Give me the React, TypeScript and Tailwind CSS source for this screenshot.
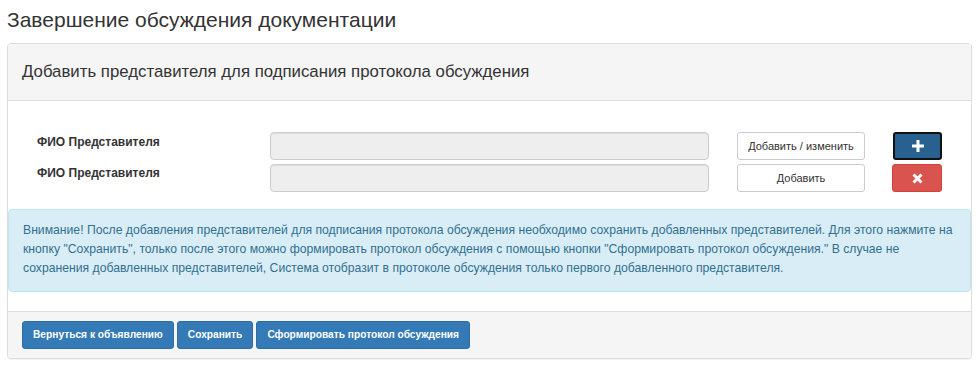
import React from "react";

const font = { fontFamily: '"Liberation Sans", Arial, sans-serif' };

function PlusIcon() {
  return (
    <svg width="12" height="12" viewBox="0 0 12 12">
      <rect x="4.5" y="0" width="3" height="12" fill="#fff" />
      <rect x="0" y="4.5" width="12" height="3" fill="#fff" />
    </svg>
  );
}

function XIcon() {
  return (
    <svg width="11" height="11" viewBox="0 0 11 11">
      <path d="M1.5 1.5 L9.5 9.5 M9.5 1.5 L1.5 9.5" stroke="#fff" strokeWidth="3" strokeLinecap="butt" />
    </svg>
  );
}

export default function App() {
  return (
    <div className="w-[980px] h-[367px] bg-white text-[#333]" style={font}>
      <div className="pl-[7px] pt-[5px]">
        <h3 className="text-[21px] leading-[30px] font-normal text-[#333] m-0">
          Завершение обсуждения документации
        </h3>
        <div className="mt-[8px] w-[965px] border border-[#dddddd] rounded-[4px] bg-white shadow-[0_1px_1px_rgba(0,0,0,0.05)]">
          <div className="h-[57px] bg-[#f5f5f5] border-b border-[#dddddd] rounded-t-[3px] px-[14px] flex items-center">
            <span className="text-[16.8px] leading-[20px] text-[#333]">
              Добавить представителя для подписания протокола обсуждения
            </span>
          </div>
          <div className="pt-[31px]">
            <div className="flex flex-col gap-[4px]">
              <div className="flex items-center h-[28px]">
                <div className="w-[262px] pl-[29px] text-[12px] font-bold text-[#333] self-start pt-[1px]">ФИО Представителя</div>
                <div className="w-[439px] h-[28px] bg-[#eeeeee] border border-[#cccccc] rounded-[4px] shadow-[inset_0_1px_1px_rgba(0,0,0,0.075)]" />
                <button className="ml-[28px] w-[128px] h-[28px] bg-white border border-[#cccccc] rounded-[3px] text-[11px] text-[#333]">
                  Добавить / изменить
                </button>
                <button className="ml-[28px] w-[49px] h-[28px] bg-[#286090] border-[2px] border-[#111] rounded-[3px] flex items-center justify-center">
                  <PlusIcon />
                </button>
              </div>
              <div className="flex items-center h-[28px]">
                <div className="w-[262px] pl-[29px] text-[12px] font-bold text-[#333] self-start pt-0">ФИО Представителя</div>
                <div className="w-[439px] h-[28px] bg-[#eeeeee] border border-[#cccccc] rounded-[4px] shadow-[inset_0_1px_1px_rgba(0,0,0,0.075)]" />
                <button className="ml-[28px] w-[128px] h-[28px] bg-white border border-[#cccccc] rounded-[3px] text-[11px] text-[#333]">
                  Добавить
                </button>
                <button className="ml-[27px] w-[50px] h-[28px] bg-[#d9534f] border border-[#d43f3a] rounded-[3px] flex items-center justify-center">
                  <XIcon />
                </button>
              </div>
            </div>
            <div className="mt-[17px] mb-[19px] bg-[#d9edf7] border border-[#bce8f1] rounded-[4px] text-[#31708f] text-[12.2px] leading-[19px] px-[14px] pt-[11px] pb-[13px]">
              Внимание! После добавления представителей для подписания протокола обсуждения необходимо сохранить добавленных представителей. Для этого нажмите на кнопку "Сохранить", только после этого можно формировать протокол обсуждения с помощью кнопки "Сформировать протокол обсуждения." В случае не сохранения добавленных представителей, Система отобразит в протоколе обсуждения только первого добавленного представителя.
            </div>
          </div>
          <div className="bg-[#f5f5f5] border-t border-[#dddddd] rounded-b-[3px] px-[14px] py-[9px] flex gap-[3px]">
            <button className="h-[28px] px-[10px] bg-[#337ab7] border border-[#2e6da4] rounded-[3px] text-white text-[10.2px] font-bold">
              Вернуться к объявлению
            </button>
            <button className="h-[28px] px-[10px] bg-[#337ab7] border border-[#2e6da4] rounded-[3px] text-white text-[10.2px] font-bold">
              Сохранить
            </button>
            <button className="h-[28px] px-[10px] bg-[#337ab7] border border-[#2e6da4] rounded-[3px] text-white text-[10.2px] font-bold">
              Сформировать протокол обсуждения
            </button>
          </div>
        </div>
      </div>
    </div>
  );
}
